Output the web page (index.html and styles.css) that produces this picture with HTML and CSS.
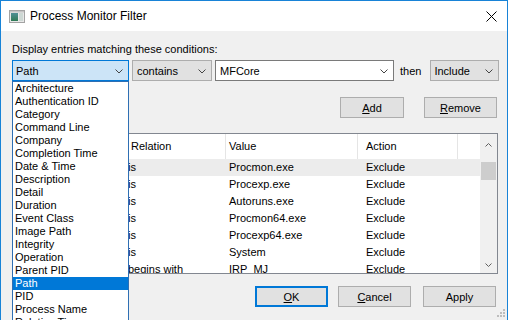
FILE: index.html
```html
<!DOCTYPE html>
<html lang="en">
<head>
    <meta charset="UTF-8">
    <title>Process Monitor Filter</title>
    <link rel="stylesheet" href="styles.css">
</head>
<body>
    <div class="window">
        <div class="titlebar">
            <svg class="app-icon" width="16" height="13" viewBox="0 0 16 13">
                <defs>
                    <linearGradient id="pane" x1="0" y1="0" x2="0" y2="1">
                        <stop offset="0" stop-color="#4f8f95"/>
                        <stop offset="1" stop-color="#2f7a55"/>
                    </linearGradient>
                </defs>
                <rect x="0.5" y="0.5" width="15" height="12" fill="#e8e8e8" stroke="#a3a3a3"/>
                <rect x="1" y="1" width="14" height="1.5" fill="#c4c4c4"/>
                <rect x="2" y="3" width="7" height="8" fill="url(#pane)"/>
                <rect x="10" y="3" width="4" height="8" fill="#cdd8d4"/>
            </svg>
            <span class="title">Process Monitor Filter</span>
            <svg class="close" width="11" height="11" viewBox="0 0 11 11">
                <path d="M0.5 0.5 L10.5 10.5 M10.5 0.5 L0.5 10.5" stroke="#000" stroke-width="1"/>
            </svg>
        </div>

        <div class="content">
            <div class="label">Display entries matching these conditions:</div>

            <div class="cond-row">
                <div class="combo focused w-column">
                    <span>Path</span>
                    <svg class="chev" width="8" height="5" viewBox="0 0 8 5"><polyline points="0.5,0.5 4,4 7.5,0.5" fill="none" stroke="#444"/></svg>
                </div>
                <div class="combo face w-relation">
                    <span>contains</span>
                    <svg class="chev" width="8" height="5" viewBox="0 0 8 5"><polyline points="0.5,0.5 4,4 7.5,0.5" fill="none" stroke="#444"/></svg>
                </div>
                <div class="combo edit w-value">
                    <span>MFCore</span>
                    <svg class="chev" width="8" height="5" viewBox="0 0 8 5"><polyline points="0.5,0.5 4,4 7.5,0.5" fill="none" stroke="#444"/></svg>
                </div>
                <span class="then">then</span>
                <div class="combo face w-action">
                    <span>Include</span>
                    <svg class="chev" width="8" height="5" viewBox="0 0 8 5"><polyline points="0.5,0.5 4,4 7.5,0.5" fill="none" stroke="#444"/></svg>
                </div>
            </div>

            <div class="edit-buttons">
                <button class="btn w-add"><u>A</u>dd</button>
                <button class="btn w-std"><u>R</u>emove</button>
            </div>

            <div class="list">
                <div class="list-body">
                    <!-- the Column column sits under the open drop-down -->
                    <div class="list-head">
                        <div class="cell c-column"></div>
                        <div class="cell c-relation head-relation">Relation</div>
                        <div class="cell c-value">Value</div>
                        <div class="cell c-action">Action</div>
                        <div class="cell c-rest"></div>
                    </div>
                    <div class="list-row hot">
                        <div class="cell c-column"></div>
                        <div class="cell c-relation">is</div>
                        <div class="cell c-value">Procmon.exe</div>
                        <div class="cell c-action">Exclude</div>
                    </div>
                    <div class="list-row">
                        <div class="cell c-column"></div>
                        <div class="cell c-relation">is</div>
                        <div class="cell c-value">Procexp.exe</div>
                        <div class="cell c-action">Exclude</div>
                    </div>
                    <div class="list-row">
                        <div class="cell c-column"></div>
                        <div class="cell c-relation">is</div>
                        <div class="cell c-value">Autoruns.exe</div>
                        <div class="cell c-action">Exclude</div>
                    </div>
                    <div class="list-row">
                        <div class="cell c-column"></div>
                        <div class="cell c-relation">is</div>
                        <div class="cell c-value">Procmon64.exe</div>
                        <div class="cell c-action">Exclude</div>
                    </div>
                    <div class="list-row">
                        <div class="cell c-column"></div>
                        <div class="cell c-relation">is</div>
                        <div class="cell c-value">Procexp64.exe</div>
                        <div class="cell c-action">Exclude</div>
                    </div>
                    <div class="list-row">
                        <div class="cell c-column"></div>
                        <div class="cell c-relation">is</div>
                        <div class="cell c-value">System</div>
                        <div class="cell c-action">Exclude</div>
                    </div>
                    <div class="list-row">
                        <div class="cell c-column"></div>
                        <div class="cell c-relation">begins with</div>
                        <div class="cell c-value">IRP_MJ_</div>
                        <div class="cell c-action">Exclude</div>
                    </div>
                </div>
                <div class="scrollbar">
                    <div class="sb-arrow up">
                        <svg width="7" height="4" viewBox="0 0 7 4"><polyline points="0.5,3.5 3.5,0.5 6.5,3.5" fill="none" stroke="#606060"/></svg>
                    </div>
                    <div class="sb-thumb"></div>
                    <div class="sb-track"></div>
                    <div class="sb-arrow down">
                        <svg width="7" height="4" viewBox="0 0 7 4"><polyline points="0.5,0.5 3.5,3.5 6.5,0.5" fill="none" stroke="#606060"/></svg>
                    </div>
                </div>
            </div>

            <div class="dialog-buttons">
                <button class="btn w-std default"><u>O</u>K</button>
                <button class="btn w-std"><u>C</u>ancel</button>
                <button class="btn w-std apply">Apply</button>
            </div>
        </div>

        <!-- open drop-down of the first combo -->
        <ul class="dropdown">
            <li>Architecture</li>
            <li>Authentication ID</li>
            <li>Category</li>
            <li>Command Line</li>
            <li>Company</li>
            <li>Completion Time</li>
            <li>Date &amp; Time</li>
            <li>Description</li>
            <li>Detail</li>
            <li>Duration</li>
            <li>Event Class</li>
            <li>Image Path</li>
            <li>Integrity</li>
            <li>Operation</li>
            <li>Parent PID</li>
            <li class="selected">Path</li>
            <li>PID</li>
            <li>Process Name</li>
            <li>Relative Time</li>
            <li>Result</li>
        </ul>

        <svg class="grip" width="9" height="9" viewBox="0 0 9 9">
            <rect x="7" y="1" width="2" height="2" fill="#bdbdbd"/>
            <rect x="7" y="4" width="2" height="2" fill="#bdbdbd"/>
            <rect x="4" y="4" width="2" height="2" fill="#bdbdbd"/>
            <rect x="7" y="7" width="2" height="2" fill="#bdbdbd"/>
            <rect x="4" y="7" width="2" height="2" fill="#bdbdbd"/>
            <rect x="1" y="7" width="2" height="2" fill="#bdbdbd"/>
        </svg>
    </div>
</body>
</html>
```

FILE: styles.css
```css
body {
    margin: 0;
    font-family: 'Liberation Sans', Arial, sans-serif;
    font-size: 11px;
    color: #000;
}
.window {
    position: relative;
    width: 508px;
    height: 320px;
    box-sizing: border-box;
    border: 1px solid #1883d7;
    border-bottom: none;
    background: #f0f0f0;
    overflow: hidden;
}
.titlebar {
    height: 30px;
    background: #fff;
    display: flex;
    align-items: center;
    padding-left: 8px;
}
.app-icon {
    margin-right: 5px;
    margin-top: 1px;
}
.title {
    font-size: 12px;
}
.close {
    margin-left: auto;
    margin-right: 10px;
}
.content {
    padding: 12px 0 0 11px;
}
.label {
    line-height: 13px;
}
.cond-row {
    display: flex;
    align-items: center;
    margin-top: 4px;
    height: 21px;
}
.combo {
    height: 21px;
    box-sizing: border-box;
    display: flex;
    align-items: center;
    justify-content: space-between;
    padding: 0 5px 0 3px;
    margin-right: 3px;
}
.combo .chev {
    margin-top: 1px;
}
.focused {
    background: #cce4f7;
    border: 1px solid #0078d7;
}
.face {
    background: #e1e1e1;
    border: 1px solid #adadad;
    padding-left: 4px;
}
.edit {
    background: #fff;
    border: 1px solid #7a7a7a;
    padding-left: 4px;
}
.w-column { width: 117px; }
.w-relation { width: 80px; }
.w-value { width: 179px; }
.w-action { width: 69px; padding-left: 3px; }
.then {
    margin: 0 9px 0 3px;
}
.edit-buttons {
    display: flex;
    justify-content: flex-end;
    gap: 20px;
    margin-top: 16px;
    margin-right: 10px;
}
.btn {
    height: 21px;
    box-sizing: border-box;
    background: #e1e1e1;
    border: 1px solid #adadad;
    font-family: inherit;
    font-size: 11px;
    color: #000;
    padding: 0;
}
.w-add { width: 64px; }
.w-std { width: 73px; }
.default {
    border: 2px solid #0078d7;
}
.list {
    display: flex;
    width: 486px;
    height: 141px;
    box-sizing: border-box;
    border: 1px solid #828790;
    background: #fff;
    margin-top: 15px;
}
.list-body {
    flex: 1;
    overflow: hidden;
}
.list-head,
.list-row {
    display: flex;
}
.list-head {
    height: 25px;
    line-height: 25px;
}
.list-head .cell {
    border-right: 1px solid #e5e5e5;
    box-sizing: border-box;
}
.list-head .c-rest {
    border-right: none;
}
.list-row {
    height: 17px;
    line-height: 17px;
}
.hot {
    background: #ececec;
}
.cell {
    white-space: nowrap;
    overflow: hidden;
}
.c-column { width: 113px; padding-left: 6px; box-sizing: border-box; }
.c-relation { width: 100px; padding-left: 2px; box-sizing: border-box; }
.head-relation { padding-left: 5px; }
.c-value { width: 132px; padding-left: 3px; box-sizing: border-box; }
.c-action { width: 100px; padding-left: 8px; box-sizing: border-box; }
.c-rest { flex: 1; }
.scrollbar {
    width: 17px;
    background: #f0f0f0;
    display: flex;
    flex-direction: column;
    align-items: center;
}
.sb-arrow {
    display: flex;
    align-items: center;
    justify-content: center;
    width: 17px;
}
.sb-arrow.up { height: 22px; }
.sb-arrow.down { height: 17px; }
.sb-thumb {
    width: 15px;
    height: 18px;
    margin-top: 6px;
    background: #cdcdcd;
}
.sb-track { flex: 1; }
.dialog-buttons {
    display: flex;
    justify-content: flex-end;
    gap: 10px;
    margin-top: 12px;
    margin-right: 11px;
}
.dialog-buttons .apply {
    margin-left: 2px;
}
.dropdown {
    position: absolute;
    left: 11px;
    top: 80px;
    width: 117px;
    height: 260px;
    box-sizing: border-box;
    margin: 0;
    padding: 0;
    list-style: none;
    background: #fff;
    border: 1px solid #2f6fb3;
}
.dropdown li {
    height: 13px;
    line-height: 13px;
    padding-left: 2px;
    white-space: nowrap;
}
.dropdown .selected {
    background: #0078d7;
    color: #fff;
}
.grip {
    position: absolute;
    right: 2px;
    bottom: 3px;
}
```
